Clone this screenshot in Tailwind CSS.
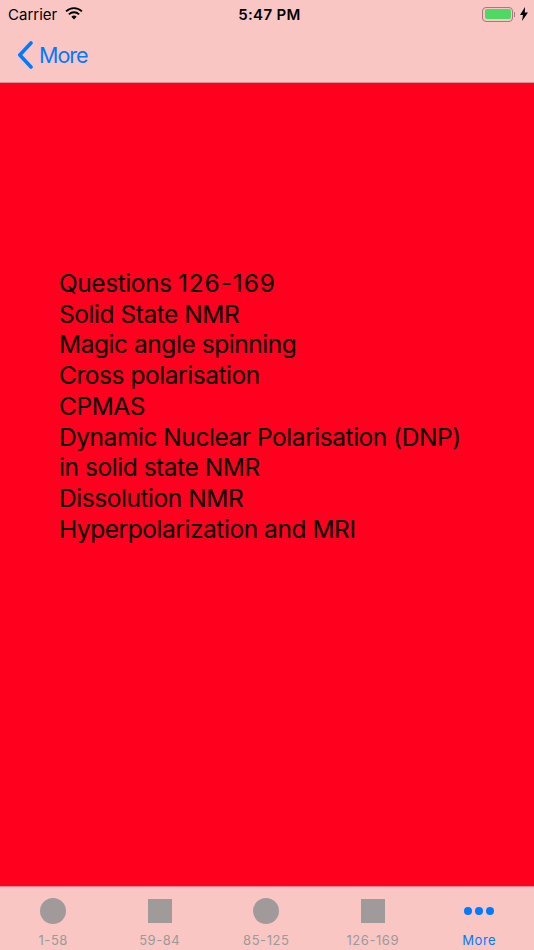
<!DOCTYPE html>
<html>
<head>
<meta charset="utf-8">
<script src="https://cdn.jsdelivr.net/npm/@tailwindcss/browser@4"></script>
</head>
<body class="m-0">
<div class="w-[534px] h-[950px] flex flex-col overflow-hidden bg-[#ff001f] font-['Inter','Liberation_Sans',sans-serif]">
  <header class="h-[83px] shrink-0 bg-[#f9c6c4] border-b border-[#dc8f95] flex flex-col">
    <div class="h-[28px] shrink-0 relative flex items-center justify-between pl-[8px] pr-[6px] text-black">
      <div class="flex items-center gap-[8px]">
        <span class="text-[15px] leading-[28px] tracking-[0px] pt-[1px]">Carrier</span>
        <svg width="18" height="13" viewBox="0 0 18 13" class="mb-[1px]"><path d="M9 12.6 6.4 9.8a3.7 3.7 0 0 1 5.2 0Z" fill="#000"/><path d="M3.9 7.3a7.2 7.2 0 0 1 10.2 0" fill="none" stroke="#000" stroke-width="1.9"/><path d="M1.1 4.4a11.2 11.2 0 0 1 15.8 0" fill="none" stroke="#000" stroke-width="1.9"/></svg>
      </div>
      <span class="absolute left-[5px] right-0 text-center text-[15px] leading-[28px] font-semibold tracking-[0.35px] pt-[1px]">5:47 PM</span>
      <div class="flex items-center gap-[5px]">
        <div class="flex items-center gap-[1px]">
          <div class="w-[31px] h-[15px] rounded-[4px] border-[1.5px] border-[#a8787e] p-[1.5px]"><div class="w-full h-full rounded-[2px] bg-[#4cd964]"></div></div>
          <div class="w-[1px] h-[5px] bg-[#a8787e]"></div>
        </div>
        <svg width="8" height="14" viewBox="0 0 8 14"><path d="M5 0 0 8h3l-1 6 6-8.400H4.800Z" fill="#000"/></svg>
      </div>
    </div>
    <div class="flex-1 flex items-center pl-[17px] pb-[1px] text-[#007aff]">
      <svg width="16" height="28" viewBox="0 0 16 28"><path d="M14 2 2.800 14 14 26" fill="none" stroke="#007aff" stroke-width="3.600" stroke-linecap="round" stroke-linejoin="round"/></svg>
      <span class="ml-[6px] text-[21.5px] leading-[28px] tracking-[-1px]">More</span>
    </div>
  </header>
  <main class="flex-1 pl-[59px] pt-[185px]">
    <p class="text-black text-[24.5px] leading-[30.7px] tracking-[-0.45px]">Questions <span class="tracking-[0.9px]">126-169</span><br>Solid State NMR<br>Magic angle spinning<br>Cross polarisation<br>CPMAS<br>Dynamic Nuclear Polarisation (DNP)<br>in solid state NMR<br>Dissolution NMR<br>Hyperpolarization and MRI</p>
  </main>
  <nav class="h-[64px] shrink-0 bg-[#f9c6c4] border-t border-[#ee7f8a] grid grid-cols-5 pr-[1.5px] text-center text-[13px] leading-[16px] tracking-[0.55px] text-[#9a9a9a]">
    <div class="flex flex-col items-center pt-[11px]"><div class="h-[26px] flex items-center"><div class="w-[26px] h-[26px] rounded-full bg-[#a09a9a]"></div></div><span class="mt-[8px]">1-58</span></div>
    <div class="flex flex-col items-center pt-[11px]"><div class="h-[26px] flex items-center"><div class="w-[24px] h-[24px] bg-[#a09a9a]"></div></div><span class="mt-[8px]">59-84</span></div>
    <div class="flex flex-col items-center pt-[11px]"><div class="h-[26px] flex items-center"><div class="w-[26px] h-[26px] rounded-full bg-[#a09a9a]"></div></div><span class="mt-[8px]">85-125</span></div>
    <div class="flex flex-col items-center pt-[11px]"><div class="h-[26px] flex items-center"><div class="w-[24px] h-[24px] bg-[#a09a9a]"></div></div><span class="mt-[8px]">126-169</span></div>
    <div class="flex flex-col items-center pt-[11px] text-[#007aff]"><div class="h-[26px] flex items-center gap-[3px]"><div class="w-[8px] h-[8px] rounded-full bg-[#007aff]"></div><div class="w-[8px] h-[8px] rounded-full bg-[#007aff]"></div><div class="w-[8px] h-[8px] rounded-full bg-[#007aff]"></div></div><span class="mt-[8px]">More</span></div>
  </nav>
</div>
</body>
</html>
